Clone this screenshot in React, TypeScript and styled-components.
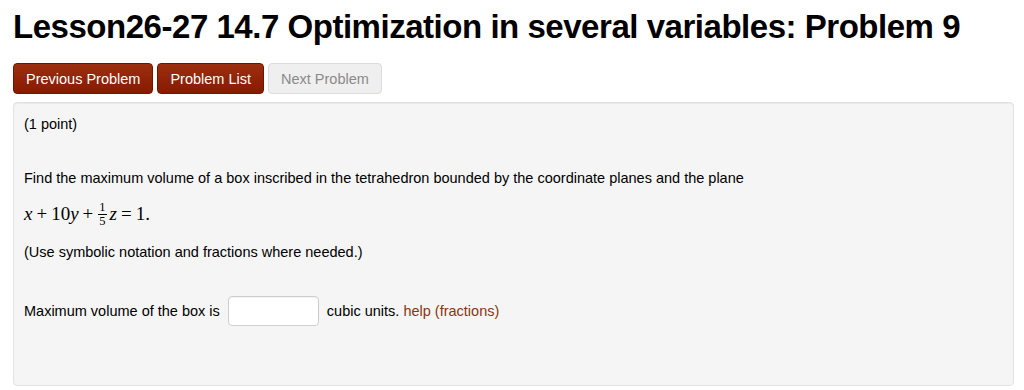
import React from 'react';
import styled, { createGlobalStyle } from 'styled-components';

const GlobalStyle = createGlobalStyle`
  html, body {
    margin: 0;
    padding: 0;
    background: #fff;
  }
  body {
    font-family: 'Liberation Sans', Arial, sans-serif;
    color: #000;
  }
`;

const Page = styled.div`
  padding: 0 10px 0 13px;
  width: 1024px;
  box-sizing: border-box;
`;

const Title = styled.h1`
  margin: 0;
  padding-top: 7px;
  font-size: 33px;
  line-height: 40px;
  font-weight: bold;
  letter-spacing: -0.47px;
`;

const NavBar = styled.div`
  display: flex;
  gap: 4px;
  margin-top: 16px;
`;

const NavButton = styled.button<{ $disabled?: boolean }>`
  height: 31px;
  padding: 0 12px;
  font-family: 'Liberation Sans', Arial, sans-serif;
  font-size: 14.5px;
  border-radius: 4px;
  border: 1px solid ${(p) => (p.$disabled ? '#dcdcdc' : '#6e1500')};
  color: ${(p) => (p.$disabled ? '#8a8a8a' : '#fff')};
  background: ${(p) =>
    p.$disabled ? '#efefef' : 'linear-gradient(to bottom, #9c2f0f, #871a00)'};
  cursor: ${(p) => (p.$disabled ? 'default' : 'pointer')};
`;

const Panel = styled.div`
  margin-top: 8px;
  height: 284px;
  box-sizing: border-box;
  background: #f5f5f5;
  border: 1px solid #e3e3e3;
  border-radius: 4px;
  box-shadow: inset 0 1px 1px rgba(0, 0, 0, 0.05);
  padding: 11px 10px;
  font-size: 14.5px;
  line-height: 20px;
`;

const Para = styled.p<{ $gap?: number }>`
  margin: ${(p) => p.$gap ?? 0}px 0 0;
`;

const MathLine = styled.div`
  margin-top: 13px;
  font-family: 'Liberation Serif', 'Times New Roman', serif;
  font-size: 19px;
  line-height: 24px;
  display: flex;
  align-items: center;
`;

const V = styled.i`
  font-style: italic;
`;

const Op = styled.span`
  padding: 0 4px;
`;

const Frac = styled.span`
  display: inline-flex;
  flex-direction: column;
  align-items: center;
  font-size: 12.5px;
  line-height: 11px;
  margin: 0 3px 0 1px;
  position: relative;
  top: 1px;
`;

const Num = styled.span`
  border-bottom: 1px solid #000;
  padding: 0 1px 1px;
`;

const Den = styled.span`
  padding-top: 1px;
`;

const AnswerRow = styled.div`
  display: flex;
  align-items: center;
  margin-top: 34px;
`;

const AnswerInput = styled.input`
  width: 91px;
  height: 30px;
  box-sizing: border-box;
  margin: 0 8px;
  border: 1px solid #cfcfcf;
  border-radius: 4px;
  background: #fff;
  box-shadow: inset 0 1px 1px rgba(0, 0, 0, 0.06);
`;

const HelpLink = styled.a`
  color: #8a3510;
  text-decoration: none;
  margin-left: 4px;
`;

export default function App() {
  return (
    <>
      <GlobalStyle />
      <Page>
        <Title>Lesson26-27 14.7 Optimization in several variables: Problem 9</Title>
        <NavBar>
          <NavButton>Previous Problem</NavButton>
          <NavButton>Problem List</NavButton>
          <NavButton $disabled>Next Problem</NavButton>
        </NavBar>
        <Panel>
          <Para>(1 point)</Para>
          <Para $gap={34}>
            Find the maximum volume of a box inscribed in the tetrahedron bounded by the
            coordinate planes and the plane
          </Para>
          <MathLine>
            <V>x</V>
            <Op>+</Op>
            10<V>y</V>
            <Op>+</Op>
            <Frac>
              <Num>1</Num>
              <Den>5</Den>
            </Frac>
            <V>z</V>
            <Op>=</Op>
            1.
          </MathLine>
          <Para $gap={16}>(Use symbolic notation and fractions where needed.)</Para>
          <AnswerRow>
            <span>Maximum volume of the box is</span>
            <AnswerInput type="text" />
            <span>cubic units.</span>
            <HelpLink href="#">help (fractions)</HelpLink>
          </AnswerRow>
        </Panel>
      </Page>
    </>
  );
}
